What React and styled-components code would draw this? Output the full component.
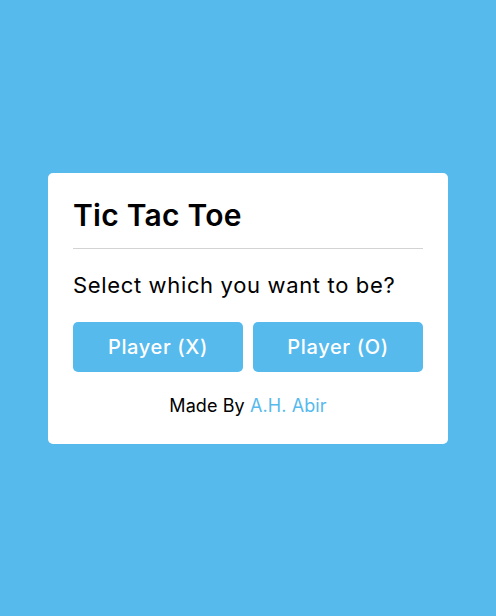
import React from "react";
import styled, { createGlobalStyle } from "styled-components";

const GlobalStyle = createGlobalStyle`
  * {
    margin: 0;
    padding: 0;
    box-sizing: border-box;
  }
  html, body, #root {
    height: 100%;
  }
  body {
    background: #56baed;
    font-family: Inter, "Open Sans", sans-serif;
  }
`;

const Page = styled.div`
  height: 100%;
  display: flex;
  align-items: center;
  justify-content: center;
`;

const SelectBox = styled.div`
  width: 400px;
  background: #fff;
  border-radius: 5px;
  padding: 20px 25px 25px;
`;

const Header = styled.header`
  font-size: 30px;
  line-height: 45px;
  font-weight: 600;
  letter-spacing: 0.25px;
  color: #000;
  padding-bottom: 10px;
  border-bottom: 1px solid lightgrey;
`;

const Title = styled.div`
  font-size: 22px;
  line-height: 33px;
  font-weight: 400;
  letter-spacing: 0.65px;
  margin: 20px 0;
  color: #000;
`;

const Options = styled.div`
  display: flex;
  gap: 10px;
`;

const OptionButton = styled.button`
  flex: 1;
  border: none;
  outline: none;
  border-radius: 5px;
  background: #56baed;
  color: #fff;
  font-family: inherit;
  font-size: 20px;
  line-height: 30px;
  font-weight: 500;
  letter-spacing: 0.65px;
  padding: 10px 0;
  cursor: pointer;
`;

const Credit = styled.p`
  text-align: center;
  margin-top: 20px;
  font-size: 18px;
  line-height: 27px;
  letter-spacing: 0.1px;
  color: #000;
`;

const Link = styled.a`
  color: #56baed;
  text-decoration: none;
`;

export default function App() {
  return (
    <>
      <GlobalStyle />
      <Page>
        <SelectBox>
          <Header>Tic Tac Toe</Header>
          <Title>Select which you want to be?</Title>
          <Options>
            <OptionButton>Player (X)</OptionButton>
            <OptionButton>Player (O)</OptionButton>
          </Options>
          <Credit>
            Made By <Link href="#">A.H. Abir</Link>
          </Credit>
        </SelectBox>
      </Page>
    </>
  );
}
